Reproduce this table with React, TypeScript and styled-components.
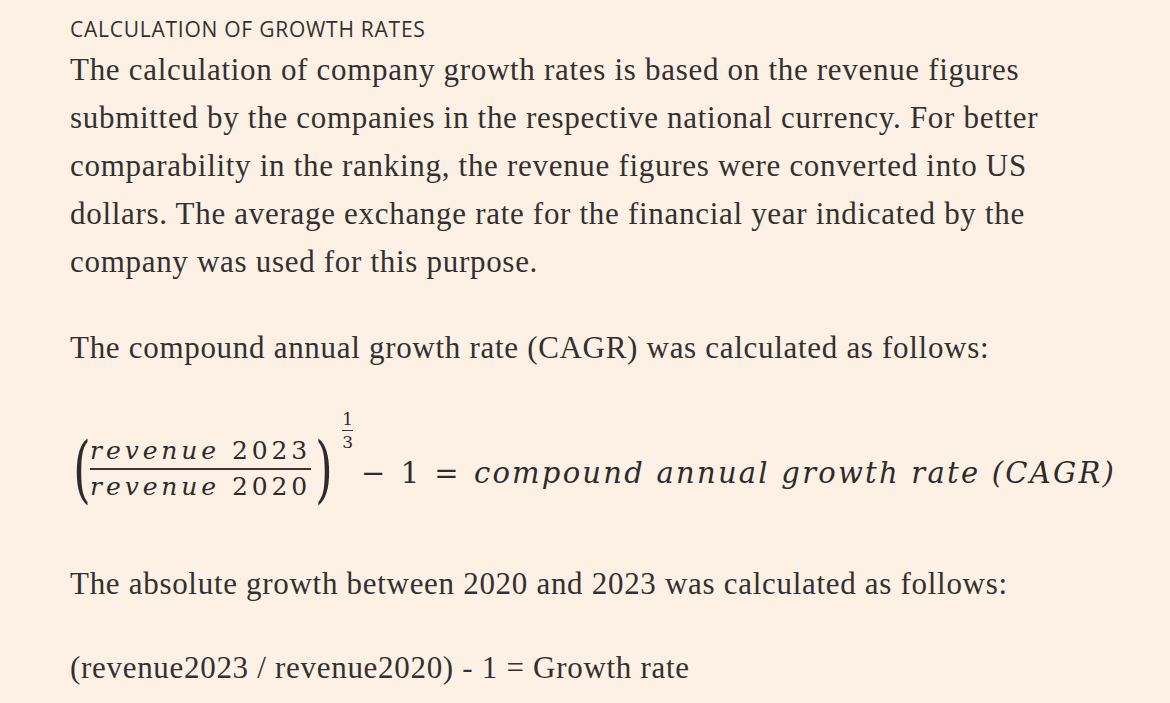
import React from "react";
import styled, { createGlobalStyle } from "styled-components";

const GlobalStyle = createGlobalStyle`
  html, body {
    margin: 0;
    padding: 0;
    background: #fdf1e6;
  }
  body {
    width: 1170px;
    height: 703px;
    overflow: hidden;
  }
`;

const Page = styled.main`
  box-sizing: border-box;
  width: 1170px;
  height: 703px;
  padding: 17px 0 0 70px;
  background: #fdf1e6;
  color: #33302e;
`;

const Heading = styled.h2`
  margin: 0 0 5px 0;
  font-family: "Open Sans", "Noto Sans", sans-serif;
  font-weight: 400;
  font-size: 21px;
  line-height: 24px;
  text-transform: uppercase;
  letter-spacing: 0.75px;
  color: #33302e;
`;

const Paragraph = styled.p<{ $gap?: number }>`
  margin: 0 0 ${(p) => p.$gap ?? 38}px 0;
  font-family: "Liberation Serif", "Times New Roman", serif;
  font-size: 31px;
  line-height: 48px;
  letter-spacing: 0.7px;
  color: #33302e;
  white-space: nowrap;
`;

const Formula = styled.div`
  box-sizing: border-box;
  display: flex;
  align-items: center;
  height: 188px;
  padding-top: 14px;
  font-family: "DejaVu Serif", serif;
  color: #2e2b29;
`;

const Paren = styled.span<{ $side: "left" | "right" }>`
  display: inline-block;
  font-family: "DejaVu Serif", serif;
  font-size: 72px;
  line-height: 1;
  transform: scaleX(0.62);
  margin: ${(p) => (p.$side === "left" ? "0 -6px 8px -2px" : "0 0 8px -1px")};
`;

const Fraction = styled.span`
  display: inline-flex;
  flex-direction: column;
  align-items: center;
  margin-bottom: 8px;
`;

const FracTerm = styled.span`
  font-size: 25px;
  line-height: 30px;
  letter-spacing: 3.9px;
  white-space: nowrap;
`;

const MathVar = styled.i`
  font-style: italic;
`;

const FracBar = styled.span<{ $thick?: number }>`
  display: block;
  align-self: stretch;
  height: ${(p) => p.$thick ?? 2}px;
  background: #3a3532;
  margin: 2px 0;
`;

const Exponent = styled.span`
  display: inline-flex;
  flex-direction: column;
  align-items: center;
  align-self: flex-start;
  margin: 24px 0 0 4px;
  font-size: 17px;
  line-height: 18px;
`;

const Rest = styled.span`
  margin-left: -5px;
  font-size: 29px;
  letter-spacing: 2.25px;
  white-space: nowrap;
`;

const Op = styled.span`
  font-style: normal;
  margin: 0 13px;
`;

export default function App() {
  return (
    <>
      <GlobalStyle />
      <Page>
        <Heading>Calculation of growth rates</Heading>
        <Paragraph>
          The calculation of company growth rates is based on the revenue figures
          <br />
          submitted by the companies in the respective national currency. For better
          <br />
          comparability in the ranking, the revenue figures were converted into US
          <br />
          dollars. The average exchange rate for the financial year indicated by the
          <br />
          company was used for this purpose.
        </Paragraph>
        <Paragraph $gap={0}>The compound annual growth rate (CAGR) was calculated as follows:</Paragraph>
        <Formula>
          <Paren $side="left">(</Paren>
          <Fraction>
            <FracTerm>
              <MathVar>revenue</MathVar> 2023
            </FracTerm>
            <FracBar />
            <FracTerm>
              <MathVar>revenue</MathVar> 2020
            </FracTerm>
          </Fraction>
          <Paren $side="right">)</Paren>
          <Exponent>
            <span>1</span>
            <FracBar $thick={1} />
            <span>3</span>
          </Exponent>
          <Rest>
            <Op>−</Op>1<Op>=</Op>
            <MathVar>compound annual growth rate (CAGR)</MathVar>
          </Rest>
        </Formula>
        <Paragraph $gap={36}>The absolute growth between 2020 and 2023 was calculated as follows:</Paragraph>
        <Paragraph $gap={0}>(revenue2023 / revenue2020) - 1 = Growth rate</Paragraph>
      </Page>
    </>
  );
}
